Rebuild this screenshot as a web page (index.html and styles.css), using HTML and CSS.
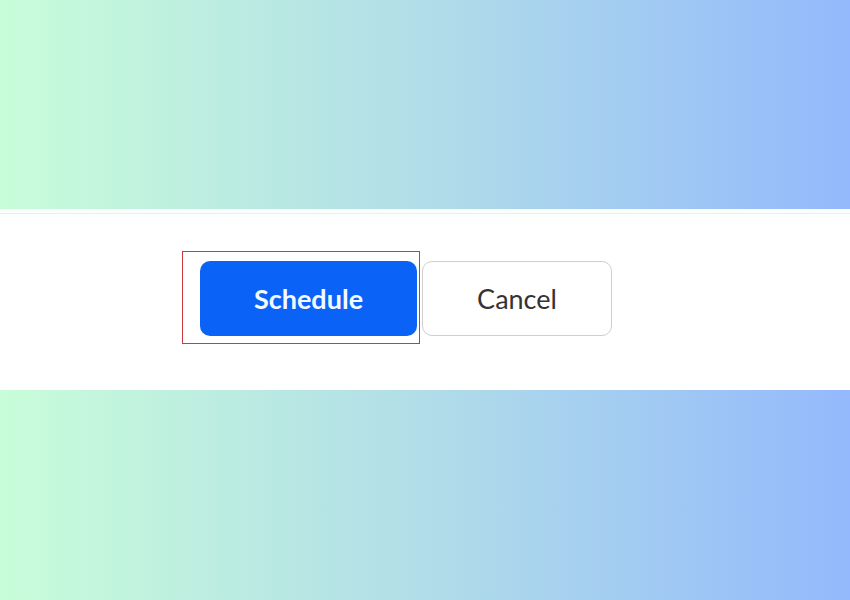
FILE: index.html
```html
<!DOCTYPE html>
<html lang="en">
<head>
    <meta charset="UTF-8">
    <meta name="viewport" content="width=device-width, initial-scale=1.0">
    <title>Schedule Meeting</title>
    <link rel="stylesheet" href="styles.css">
</head>
<body>
    <!-- 위 배경 -->
    <div class="backdrop"></div>

    <div class="panel">
        <div class="panel-line"></div>
        <div class="actions">
            <!-- 강조 표시된 버튼 -->
            <span class="highlight">
                <button class="schedule-btn">Schedule</button>
            </span>
            <button class="cancel-btn">Cancel</button>
        </div>
    </div>

    <!-- 아래 배경 -->
    <div class="backdrop bottom"></div>
</body>
</html>
```

FILE: styles.css
```css
* {
    box-sizing: border-box;
    margin: 0;
    padding: 0;
}

body {
    font-family: Lato, "Liberation Sans", sans-serif;
    background-color: #fff;
}

.backdrop {
    height: 209px;
    background: linear-gradient(to right, #c8fdd9, #b0dde8 50%, #94b9fc);
}

.backdrop.bottom {
    height: 210px;
}

.panel {
    height: 181px;
    background-color: #fff;
}

.panel-line {
    height: 5px;
    background-color: #fafefc;
    border-bottom: 1px solid #f1eaee;
}

.actions {
    display: flex;
    align-items: flex-start;
    gap: 2px;
    padding-left: 182px;
    padding-top: 37px;
}

.highlight {
    display: block;
    padding: 9px 2px 7px 17px;
    border: 1px solid #cc3a40;
}

.schedule-btn,
.cancel-btn {
    height: 75px;
    border-radius: 10px;
    font-family: Lato, "Liberation Sans", sans-serif;
    font-size: 27px;
    cursor: pointer;
}

.schedule-btn {
    display: block;
    width: 217px;
    background-color: #0b62f6;
    color: #f4fbff;
    font-weight: bold;
    border: none;
}

.cancel-btn {
    margin-top: 10px;
    width: 190px;
    background-color: #fff;
    color: #333;
    border: 1px solid #cfcfcf;
}
```
